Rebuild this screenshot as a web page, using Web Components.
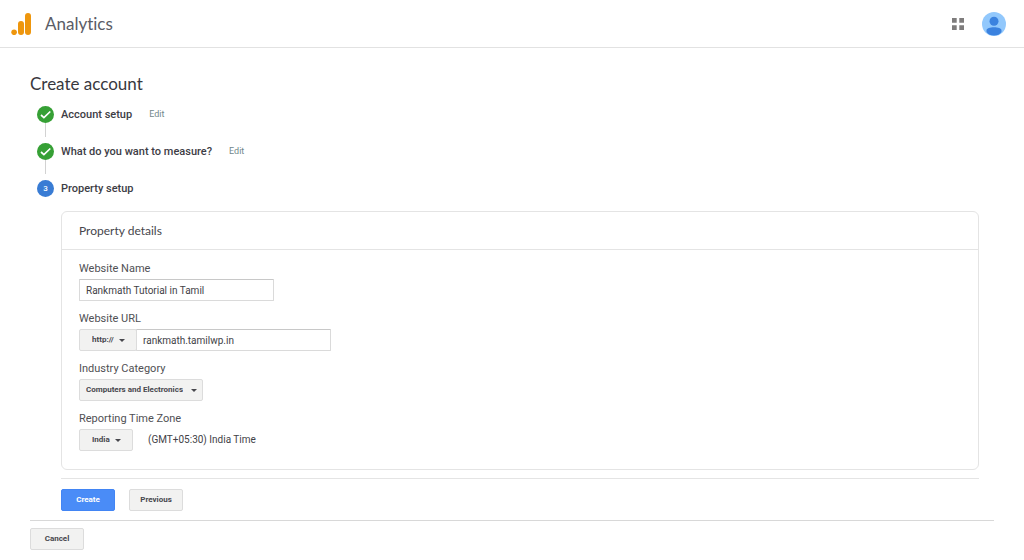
<!DOCTYPE html>
<html lang="en">
<head>
<meta charset="utf-8">
<meta name="viewport" content="width=device-width, initial-scale=1">
<title>Analytics</title>
<style>
  body { margin: 0; background: #fff; color: #424247; font: 11px/16px Roboto, "Liberation Sans", sans-serif; font-variant-ligatures: none; --display: Lato, "Open Sans", sans-serif; --line: #e4e4e4; }
</style>
</head>
<body>
<ga-page></ga-page>
<script>
const define = (name, html, setup) => {
  const template = document.createElement('template');
  template.innerHTML = html;
  customElements.define(name, class extends HTMLElement {
    constructor() {
      super();
      this.attachShadow({ mode: 'open' }).append(template.content.cloneNode(true));
    }
    connectedCallback() { if (setup) setup(this, this.shadowRoot); }
  });
};

define('ga-header', `
<style>
  :host { display: block; }
  header { display: flex; align-items: center; height: 47px; padding: 0 18px 0 11px; border-bottom: 1px solid #e2e2e2; }
  .logo { width: 20px; height: 23px; margin-right: 14px; }
  .name { flex: 1; font-family: var(--display); font-size: 17px; line-height: 24px; color: #5a5c66; }
  button { display: flex; padding: 0; border: 0; background: none; }
  .apps { margin-right: 18px; }
</style>
<header>
  <svg class="logo" viewBox="0 0 20 23" aria-hidden="true"><g fill="#ee960d"><rect x="14" y="1" width="6" height="22" rx="3"/><rect x="7" y="9" width="6" height="14" rx="3"/><circle cx="3.1" cy="20.3" r="2.8"/></g></svg>
  <span class="name">Analytics</span>
  <button class="apps" aria-label="Apps"><svg width="12" height="13" viewBox="0 0 12 13" fill="#7e7c7c"><path d="M0 1h4.700v4.700H0zM7.300 1H12v4.700H7.300zM0 8.300h4.700V13H0zM7.300 8.300H12V13H7.300z"/></svg></button>
  <button aria-label="Profile"><svg width="24" height="24" viewBox="0 0 24 24"><circle cx="12" cy="12" r="12" fill="#92c8fc"/><circle cx="12" cy="9.2" r="4.5" fill="#3b82df"/><path d="M4.500 20V18.400C4.500 16 8.200 15.200 12 15.200s7.500.8 7.500 3.200V20c-1.500 2.400-4.200 3.600-7.500 3.600S6 22.400 4.500 20z" fill="#3b82df"/></svg></button>
</header>`);

define('ga-step', `
<style>
  :host { display: flex; height: 37px; align-items: flex-start; }
  :host([state=current]) { height: 17px; }
  .mark { display: flex; flex-direction: column; align-items: center; width: 17px; height: 100%; margin-right: 7px; }
  svg { flex: none; }
  .rail { flex: none; width: 1px; height: 14px; background: #d2d2d2; }
  .number { display: none; width: 17px; height: 17px; border-radius: 50%; background: #397cd4; color: #fff; font: 500 8px/17px Roboto, sans-serif; text-align: center; }
  :host([state=current]) .number { display: block; }
  :host([state=current]) :is(svg, .rail, a) { display: none; }
  h2 { margin: 0; font-weight: 500; font-size: 11px; line-height: 17px; color: #3d3d45; }
  a { margin-left: 17px; font-size: 9px; line-height: 17px; color: #71888c; text-decoration: none; }
</style>
<span class="mark">
  <svg width="17" height="17" viewBox="0 0 17 17" aria-hidden="true"><circle cx="8.500" cy="8.500" r="8.500" fill="#36a035"/><path d="M4 9l2.900 2.600L13.300 5.500" fill="none" stroke="#fff" stroke-width="1.700"/></svg>
  <span class="rail"></span><span class="number">3</span>
</span>
<h2><slot></slot></h2><a href="#">Edit</a>`);

define('ga-button', `
<style>
  :host { display: block; }
  button { display: block; box-sizing: border-box; height: 22px; min-width: 54px; padding: 0 10px; border: 1px solid #dcdcdc; border-radius: 2px; background: #f2f2f1; color: #47474d; font: bold 8px/20px Roboto, sans-serif; }
  :host([primary]) button { border-color: #4285f4; background: #4a8cf7; color: #fff; }
</style>
<button type="button"><slot></slot></button>`);

define('ga-field', `
<style>
  :host { display: block; }
  label { display: block; margin-bottom: 2px; font-size: 11px; line-height: 16px; color: #505054; }
  .row { display: flex; align-items: center; }
  input { box-sizing: border-box; width: 195px; height: 22px; margin: 0; padding: 0 6px; border: 1px solid #dadada; border-top-color: #c8c8c8; border-radius: 1px; background: #fff; color: #424247; font: 10px/20px Roboto, sans-serif; }
  .pick { position: relative; display: block; }
  .pick::after { content: ""; position: absolute; right: 6px; top: 10px; border: 3px solid transparent; border-top-color: #47474d; border-bottom: 0; pointer-events: none; }
  select { display: block; box-sizing: border-box; appearance: none; height: 22px; margin: 0; padding: 0 19px 0 6px; border: 1px solid #dcdcdc; border-radius: 2px; background: #f2f2f1; color: #47474d; font: bold 8px/20px Roboto, sans-serif; }
  .wide select { padding: 0 22px 0 12px; }
  .wide::after { right: 12px; }
  .pick + input { margin-left: -1px; }
  .note { margin-left: 15px; font-size: 10px; }
</style>
<label for="control"></label>
<div class="row"></div>`, (host, root) => {
  const row = root.querySelector('.row');
  if (row.children.length) return;
  root.querySelector('label').textContent = host.getAttribute('label');
  const choice = host.getAttribute('choice');
  const value = host.getAttribute('value');
  if (choice) {
    const pick = document.createElement('span');
    pick.className = host.hasAttribute('wide') ? 'pick wide' : 'pick';
    const select = document.createElement('select');
    select.add(new Option(choice));
    if (value) select.setAttribute('aria-label', 'Protocol');
    else select.id = 'control';
    pick.append(select);
    row.append(pick);
  }
  if (value) {
    const input = document.createElement('input');
    input.id = 'control';
    input.type = 'text';
    input.value = value;
    row.append(input);
  }
  if (host.hasAttribute('note')) {
    const note = document.createElement('span');
    note.className = 'note';
    note.textContent = host.getAttribute('note');
    row.append(note);
  }
});

define('ga-card', `
<style>
  :host { display: block; border: 1px solid var(--line); border-radius: 6px; }
  h3 { margin: 0; padding: 10px 17px; border-bottom: 1px solid var(--line); font-family: var(--display); font-size: 12px; line-height: 17px; font-weight: 400; color: #46464c; }
  .body { display: grid; gap: 10px; padding: 11px 17px 18px; }
</style>
<h3><slot name="title"></slot></h3>
<div class="body"><slot></slot></div>`);

define('ga-page', `
<style>
  :host { display: block; }
  main { padding: 24px 30px 8px; }
  h1 { margin: 0 0 10px; font-family: var(--display); font-size: 17px; line-height: 24px; font-weight: 400; color: #38383e; }
  .steps { padding-left: 7px; }
  .panel { margin: 14px 15px 0 31px; }
  .actions { display: flex; gap: 14px; margin-top: 8px; padding: 10px 0 9px; border-top: 1px solid var(--line); }
  .footer { display: flex; padding-top: 7px; border-top: 1px solid #d8d8d8; }
</style>
<ga-header></ga-header>
<main>
  <h1>Create account</h1>
  <div class="steps">
    <ga-step>Account setup</ga-step>
    <ga-step>What do you want to measure?</ga-step>
    <ga-step state="current">Property setup</ga-step>
  </div>
  <div class="panel">
    <ga-card>
      <span slot="title">Property details</span>
      <ga-field label="Website Name" value="Rankmath Tutorial in Tamil"></ga-field>
      <ga-field label="Website URL" choice="http://" wide value="rankmath.tamilwp.in"></ga-field>
      <ga-field label="Industry Category" choice="Computers and Electronics"></ga-field>
      <ga-field label="Reporting Time Zone" choice="India" wide note="(GMT+05:30) India Time"></ga-field>
    </ga-card>
    <div class="actions"><ga-button primary>Create</ga-button><ga-button>Previous</ga-button></div>
  </div>
  <div class="footer"><ga-button>Cancel</ga-button></div>
</main>`);
</script>
</body>
</html>
